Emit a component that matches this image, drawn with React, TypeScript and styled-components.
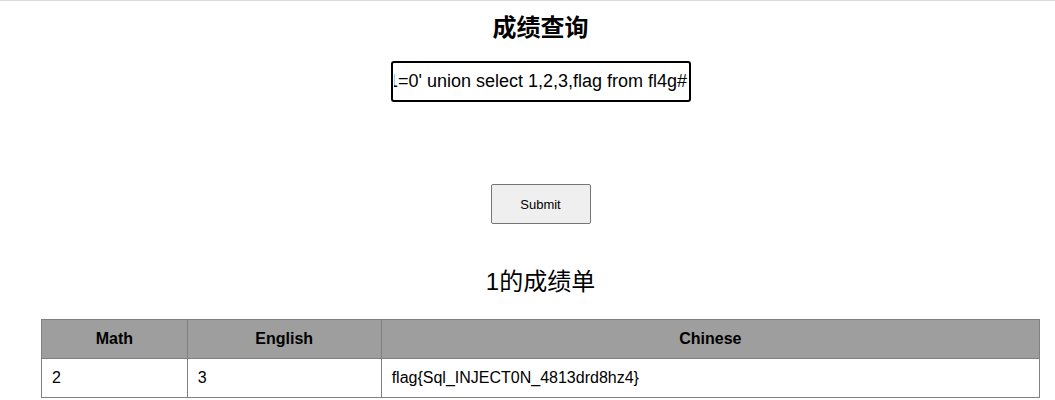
import { useEffect, useRef } from "react";
import styled, { createGlobalStyle } from "styled-components";

const GlobalStyle = createGlobalStyle`
  html, body {
    margin: 0;
    padding: 0;
    background: #fff;
    overflow: hidden;
  }
  body {
    font-family: "Liberation Sans", Arial, "Noto Sans CJK SC", sans-serif;
    color: #000;
  }
`;

const Page = styled.div`
  width: 1081px;
  border-top: 1px solid #dadada;
  display: flex;
  flex-direction: column;
  align-items: center;
`;

const Title = styled.h1`
  margin: 13px 0 0;
  font-size: 24px;
  line-height: 28px;
  font-weight: 700;
`;

const Form = styled.form`
  display: flex;
  flex-direction: column;
  align-items: center;
`;

const QueryInput = styled.input`
  box-sizing: border-box;
  margin-top: 19px;
  width: 300px;
  height: 41px;
  padding: 0 1px;
  border: 2px solid #000;
  border-radius: 3px;
  font-family: "Liberation Sans", Arial, sans-serif;
  font-size: 18px;
  color: #000;
  outline: none;
`;

const SubmitButton = styled.button`
  box-sizing: border-box;
  margin-top: 82px;
  width: 100px;
  height: 40px;
  background: #efefef;
  border: 1px solid #767676;
  border-radius: 2px;
  font-family: "Liberation Sans", Arial, sans-serif;
  font-size: 13px;
  color: #000;
`;

const Subtitle = styled.h2`
  margin: 44px 0 0;
  font-size: 24px;
  line-height: 28px;
  font-weight: 400;
`;

const ScoreTable = styled.table`
  margin-top: 23px;
  width: 999px;
  border-collapse: collapse;
  border: 1px solid #808080;
  font-size: 16px;

  th, td {
    border: 1px solid #808080;
    height: 38px;
    padding: 0 10px;
  }

  th {
    background: #9e9e9e;
    font-weight: 700;
    text-align: center;
  }

  td {
    text-align: left;
  }
`;

const Col = styled.col<{ $w: number }>`
  width: ${(p) => p.$w}px;
`;

const App = () => {
  const inputRef = useRef<HTMLInputElement>(null);

  useEffect(() => {
    const el = inputRef.current;
    if (el) el.scrollLeft = el.scrollWidth;
  }, []);

  return (
    <>
      <GlobalStyle />
      <Page>
        <Title>成绩查询</Title>
        <Form onSubmit={(e) => e.preventDefault()}>
          <QueryInput
            ref={inputRef}
            type="text"
            name="id"
            defaultValue="-1' and 1=0' union select 1,2,3,flag from fl4g#"
          />
          <SubmitButton type="submit">Submit</SubmitButton>
        </Form>
        <Subtitle>1的成绩单</Subtitle>
        <ScoreTable>
          <colgroup>
            <Col $w={146} />
            <Col $w={194} />
            <Col $w={659} />
          </colgroup>
          <thead>
            <tr>
              <th>Math</th>
              <th>English</th>
              <th>Chinese</th>
            </tr>
          </thead>
          <tbody>
            <tr>
              <td>2</td>
              <td>3</td>
              <td>flag{"{"}Sql_INJECT0N_4813drd8hz4{"}"}</td>
            </tr>
          </tbody>
        </ScoreTable>
      </Page>
    </>
  );
};

export default App;
